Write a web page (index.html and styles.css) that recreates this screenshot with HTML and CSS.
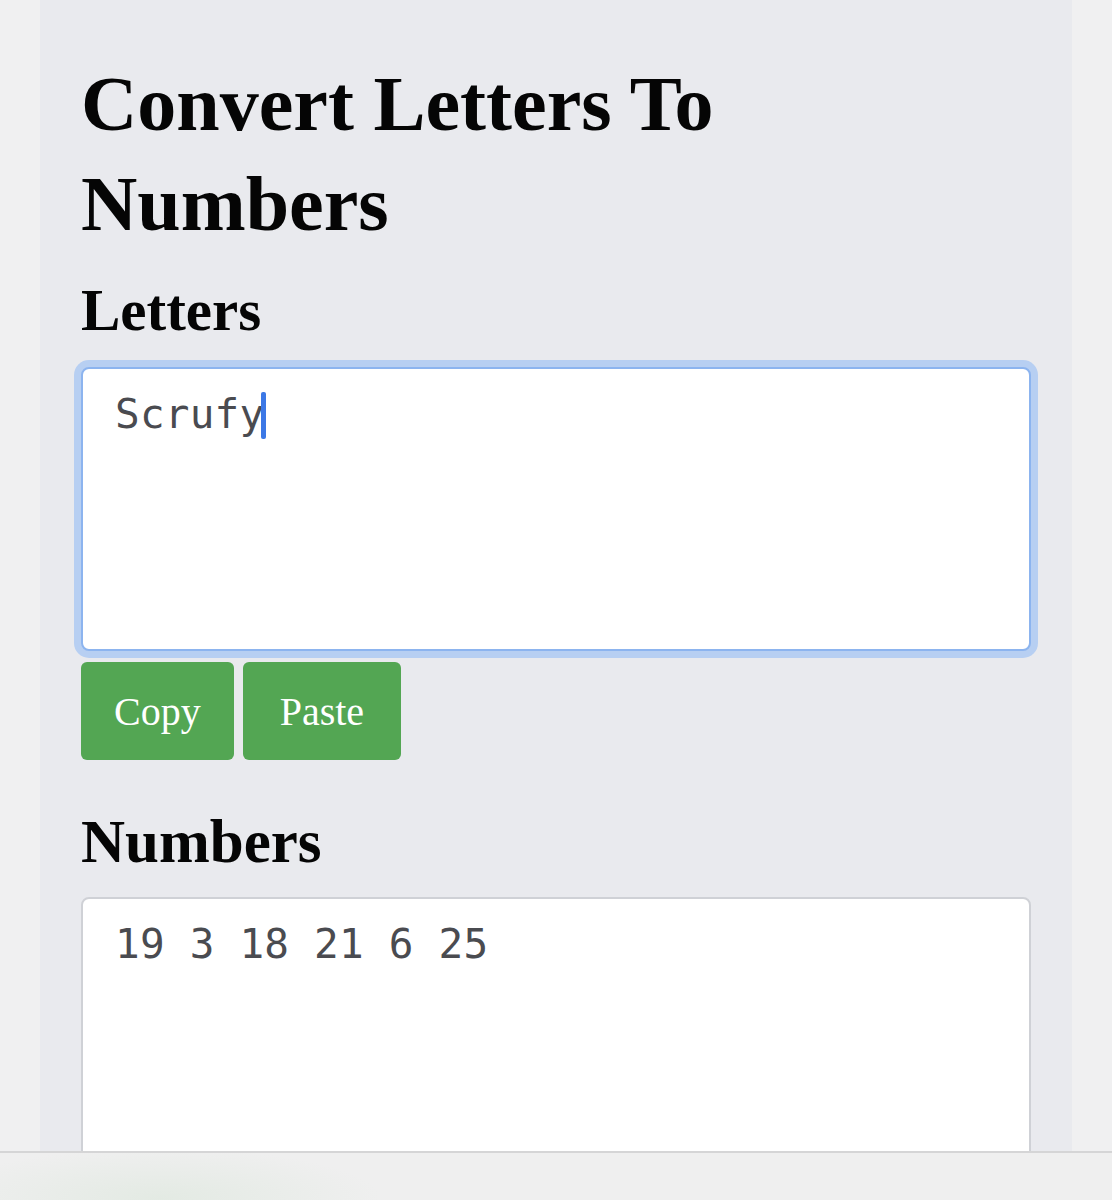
FILE: index.html
```html
<!DOCTYPE html>
<html lang="en">
<head>
<meta charset="utf-8">
<title>Convert Letters To Numbers</title>
<link rel="stylesheet" href="styles.css">
</head>
<body>
<main class="page">
  <h1 class="title">Convert Letters To Numbers</h1>

  <h2 class="label">Letters</h2>
  <div class="box box-focused" role="textbox" aria-multiline="true">Scrufy<span class="caret"></span></div>
  <div class="actions">
    <button class="btn" type="button">Copy</button>
    <button class="btn btn-wide" type="button">Paste</button>
  </div>

  <h2 class="label label-numbers">Numbers</h2>
  <div class="box box-tall" role="textbox" aria-multiline="true">19 3 18 21 6 25</div>
</main>
<div class="toolbar"></div>
</body>
</html>
```

FILE: styles.css
```css
html, body {
  margin: 0;
  padding: 0;
}

body {
  background: #f0f0f1;
  height: 1200px;
  overflow: hidden;
}

.page {
  width: 1032px;
  height: 1200px;
  margin-left: 40px;
  padding: 54px 41px 0;
  box-sizing: border-box;
  overflow: hidden;
  background: #e9eaee;
}

.title {
  margin: 0;
  font-family: "Liberation Serif", "Times New Roman", serif;
  font-weight: 700;
  font-size: 78px;
  line-height: 100px;
  color: #050505;
  max-width: 720px;
}

.label {
  margin: 21px 0 0;
  font-family: "Liberation Serif", "Times New Roman", serif;
  font-weight: 700;
  font-size: 59px;
  line-height: 70px;
  color: #050505;
}

.label-numbers {
  margin-top: 47px;
  font-size: 61px;
}

.box {
  margin-top: 22px;
  height: 284px;
  box-sizing: border-box;
  padding: 21px 32px;
  background: #ffffff;
  border: 2px solid #cfd1d6;
  border-radius: 8px;
  font-family: "DejaVu Sans Mono", "Liberation Mono", monospace;
  font-size: 41px;
  letter-spacing: 0.2px;
  color: #4a4b50;
  white-space: pre;
}

.box-focused {
  border-color: #8cb4ef;
  box-shadow: 0 0 0 7px #b7cff2;
}

.box-tall {
  margin-top: 20px;
  height: 300px;
}

.caret {
  display: inline-block;
  width: 5px;
  height: 47px;
  margin-left: -3px;
  vertical-align: -11px;
  border-radius: 2px;
  background: #3c78e6;
}

.actions {
  display: flex;
  gap: 9px;
  margin-top: 11px;
}

.btn {
  height: 98px;
  padding: 0 33px;
  border: none;
  border-radius: 6px;
  background: #53a653;
  color: #ffffff;
  font-family: "Liberation Serif", "Times New Roman", serif;
  font-size: 40px;
}

.btn-wide {
  padding: 0 37px;
}

/* browser bottom toolbar */
.toolbar {
  position: fixed;
  left: 0;
  right: 0;
  bottom: 0;
  height: 47px;
  border-top: 2px solid #d5d5d6;
  background:
    radial-gradient(ellipse 220px 50px at 160px 45px, rgba(205, 225, 205, 0.35), rgba(205, 225, 205, 0)),
    #efefef;
}
```
